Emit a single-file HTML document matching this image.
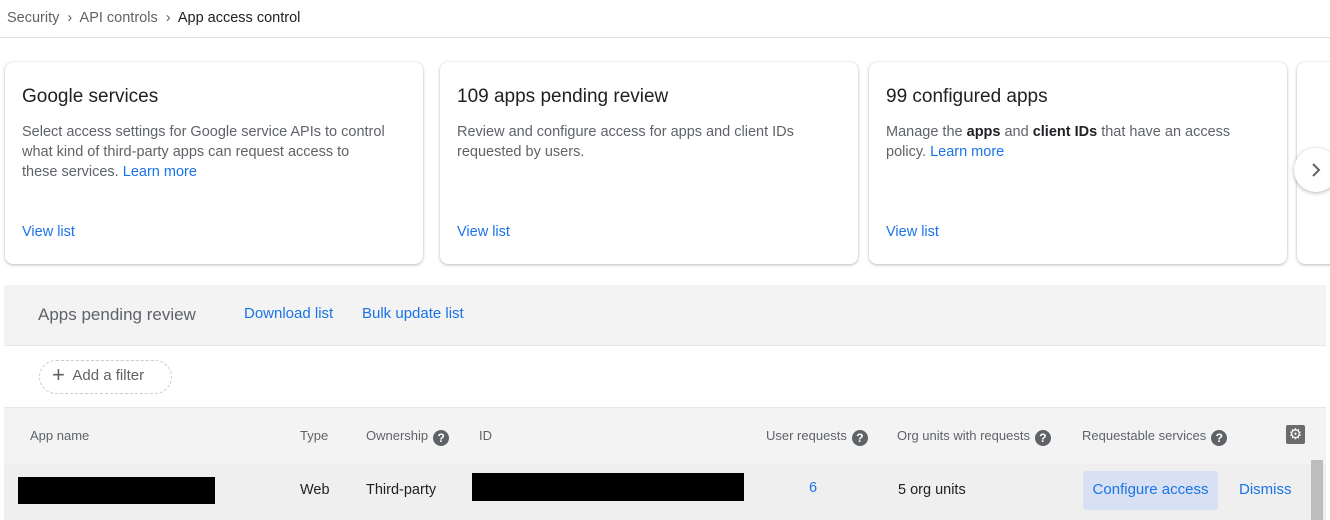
<!DOCTYPE html>
<html><head><style>
body{margin:0;width:1330px;height:520px;overflow:hidden;background:#fff;font-family:"Liberation Sans",sans-serif;position:relative}
.a{position:absolute;white-space:nowrap}
.card{position:absolute;top:62px;height:202px;background:#fff;border-radius:8px;box-shadow:0 1px 3px rgba(0,0,0,.25),0 0 1px rgba(0,0,0,.15)}
.card h2{position:absolute;left:17px;top:24px;margin:0;font-weight:normal;font-size:19px;color:#202124}
.card p{position:absolute;left:17px;top:60px;margin:0;font-size:14.5px;line-height:20px;color:#5f6368;width:385px}
.card .v{position:absolute;left:17px;top:162px;font-size:14.5px;color:#1a73e8}
.l{color:#1a73e8}
.n{font-family:"Liberation Sans Narrow","Liberation Sans",sans-serif}
.q{display:inline-block;width:16px;height:16px;border-radius:50%;background:#5f6368;color:#fff;font-size:12px;font-weight:bold;text-align:center;line-height:16px;vertical-align:-2px;margin-left:5px}
.h{font-size:13px;color:#5f6368}
</style></head><body>
<div class="a" style="left:7px;top:10px;font-size:14.5px;color:#5f6368">Security &nbsp;›&nbsp; API controls &nbsp;›&nbsp; <span style="color:#202124">App access control</span></div>
<div class="a" style="left:0;top:37px;width:1330px;height:1px;background:#e0e0e0"></div>

<div class="card" style="left:5px;width:418px"><h2>Google services</h2><p>Select access settings for Google service APIs to control<br>what kind of third-party apps can request access to<br>these services. <span class="l">Learn more</span></p><div class="v">View list</div></div>
<div class="card" style="left:440px;width:418px"><h2>109 apps pending review</h2><p>Review and configure access for apps and client IDs requested by users.</p><div class="v">View list</div></div>
<div class="card" style="left:869px;width:418px"><h2>99 configured apps</h2><p style="width:360px">Manage the <b style="color:#202124">apps</b> and <b style="color:#202124">client IDs</b> that have an access policy. <span class="l">Learn more</span></p><div class="v">View list</div></div>
<div class="card" style="left:1297px;width:60px"></div>
<div class="a" style="left:1294px;top:148px;width:44px;height:44px;border-radius:50%;background:#fff;box-shadow:0 1px 4px rgba(0,0,0,.3);"><svg width="44" height="44"><path d="M19 16l6 6-6 6" stroke="#5f6368" stroke-width="2" fill="none"/></svg></div>

<div class="a" style="left:4px;top:285px;width:1322px;height:60px;background:#f3f3f3;border-bottom:1px solid #e6e6e6"></div>
<div class="a n" style="left:38px;top:305px;font-size:17px;color:#5f6368">Apps pending review</div>
<div class="a n" style="left:244px;top:305px;font-size:15px;color:#1a73e8">Download list</div>
<div class="a n" style="left:362px;top:305px;font-size:15px;color:#1a73e8">Bulk update list</div>
<div class="a" style="left:39px;top:360px;width:131px;height:32px;border:1px dashed #ccc;border-radius:17px"></div>
<div class="a n" style="left:52px;top:366px;font-size:15px;color:#5f6368"><span style="font-size:22px;line-height:18px;vertical-align:-2px">+</span>&nbsp; Add a filter</div>
<div class="a" style="left:4px;top:407px;width:1322px;height:56px;background:#f3f3f3;border-top:1px solid #e6e6e6;border-bottom:1px solid #e2e2e2"></div>
<div class="a n h" style="left:30px;top:428px">App name</div>
<div class="a n h" style="left:300px;top:428px">Type</div>
<div class="a n h" style="left:366px;top:428px">Ownership<span class="q">?</span></div>
<div class="a n h" style="left:479px;top:428px">ID</div>
<div class="a n h" style="left:766px;top:428px">User requests<span class="q">?</span></div>
<div class="a n h" style="left:897px;top:428px">Org units with requests<span class="q">?</span></div>
<div class="a n h" style="left:1082px;top:428px">Requestable services<span class="q">?</span></div>
<div class="a" style="left:1286px;top:425px;width:19px;height:19px;background:#6b6b6b;border-radius:2px;color:#fff;font-size:15px;text-align:center;line-height:19px">⚙</div>
<div class="a" style="left:4px;top:464px;width:1322px;height:56px;background:#efefef"></div>
<div class="a" style="left:18px;top:477px;width:197px;height:27px;background:#000"></div>
<div class="a n" style="left:300px;top:482px;font-size:14.5px;color:#202124">Web</div>
<div class="a n" style="left:366px;top:482px;font-size:14.5px;color:#202124">Third-party</div>
<div class="a" style="left:472px;top:473px;width:272px;height:28px;background:#000"></div>
<div class="a n" style="left:809px;top:480px;font-size:14.5px;color:#1a73e8">6</div>
<div class="a n" style="left:898px;top:482px;font-size:14.5px;color:#202124">5 org units</div>
<div class="a n" style="left:1083px;top:471px;width:135px;height:39px;background:#d7e1f3;border-radius:3px;font-size:15px;color:#1a73e8;text-align:center;line-height:38px">Configure access</div>
<div class="a n" style="left:1239px;top:481px;font-size:15px;color:#1a73e8">Dismiss</div>
<div class="a" style="left:1311px;top:460px;width:12px;height:60px;background:#bdbdbd"></div>
</body></html>
